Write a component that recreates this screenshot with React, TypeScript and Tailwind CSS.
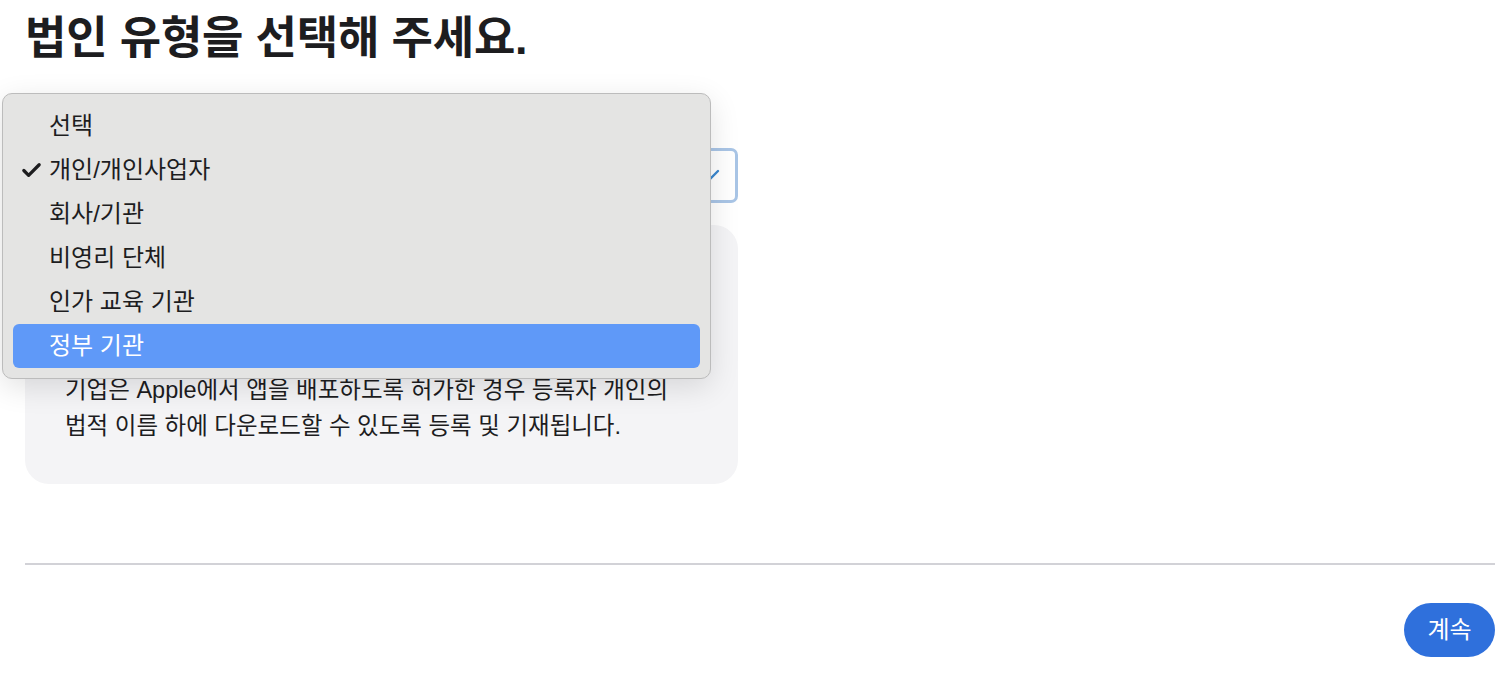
import { Check } from "lucide-react";

const options = ["선택", "개인/개인사업자", "회사/기관", "비영리 단체", "인가 교육 기관", "정부 기관"];

export default function App() {
  const font = { fontFamily: '"Liberation Sans", "Noto Sans CJK KR", sans-serif' };

  return (
    <div className="relative min-h-[700px] bg-white pl-[25px] pr-[17px] pt-[11px] text-[#1d1d1f]" style={font}>
      <h1 className="text-[45px] font-bold leading-[56px] tracking-[-0.2px]">법인 유형을 선택해 주세요.</h1>

      <div className="mt-[81px] flex h-[55px] w-[713px] items-center justify-between rounded-[7px] border-[3px] border-[#a9c5e6] pl-4 pr-[15px]">
        <span className="text-[24px]">개인/개인사업자</span>
        <svg width="24" height="14" viewBox="0 0 24 14" fill="none" stroke="#3a87cf" strokeWidth="2.4" strokeLinecap="round">
          <polyline points="2,2 12,12 22,2" />
        </svg>
      </div>

      <div className="mt-[22px] w-[713px] rounded-[24px] bg-[#f4f4f6] px-10 pb-10 pt-[39px] text-[23.5px] leading-[36px]">
        <p className="font-bold">개인/개인사업자</p>
        <p>
          개인 자격으로 앱을 배포하려는 경우 이 유형을 선택하세요.
          <br />
          개인 또는 개인사업자로 등록하여 Apple Developer
          <br />
          기업은 Apple에서 앱을 배포하도록 허가한 경우 등록자 개인의
          <br />
          법적 이름 하에 다운로드할 수 있도록 등록 및 기재됩니다.
        </p>
      </div>

      <div className="mt-[79px] h-[2px] w-full bg-[#d2d2d7]" />

      <div className="mt-[38px] flex justify-end">
        <button className="h-[54px] w-[91px] rounded-full bg-[#2f70dc] text-[24px] text-white">계속</button>
      </div>

      <div className="absolute left-[2px] top-[93px] w-[709px] rounded-[10px] border border-[#bcbcbc] bg-[#e4e4e3] px-[10px] py-[10px] shadow-[0_8px_30px_rgba(0,0,0,0.12)]">
        {options.map((o, i) => (
          <div
            key={o}
            className={
              i === 5
                ? "relative flex h-[44px] items-center rounded-[6px] bg-[#5f99f8] pl-[36px] text-[24px] text-white"
                : "relative flex h-[44px] items-center pl-[36px] text-[24px] text-[#1d1d1f]"
            }
          >
            {i === 1 && <Check className="absolute left-[7px] h-[23px] w-[23px]" strokeWidth={3.4} />}
            {o}
          </div>
        ))}
      </div>
    </div>
  );
}
